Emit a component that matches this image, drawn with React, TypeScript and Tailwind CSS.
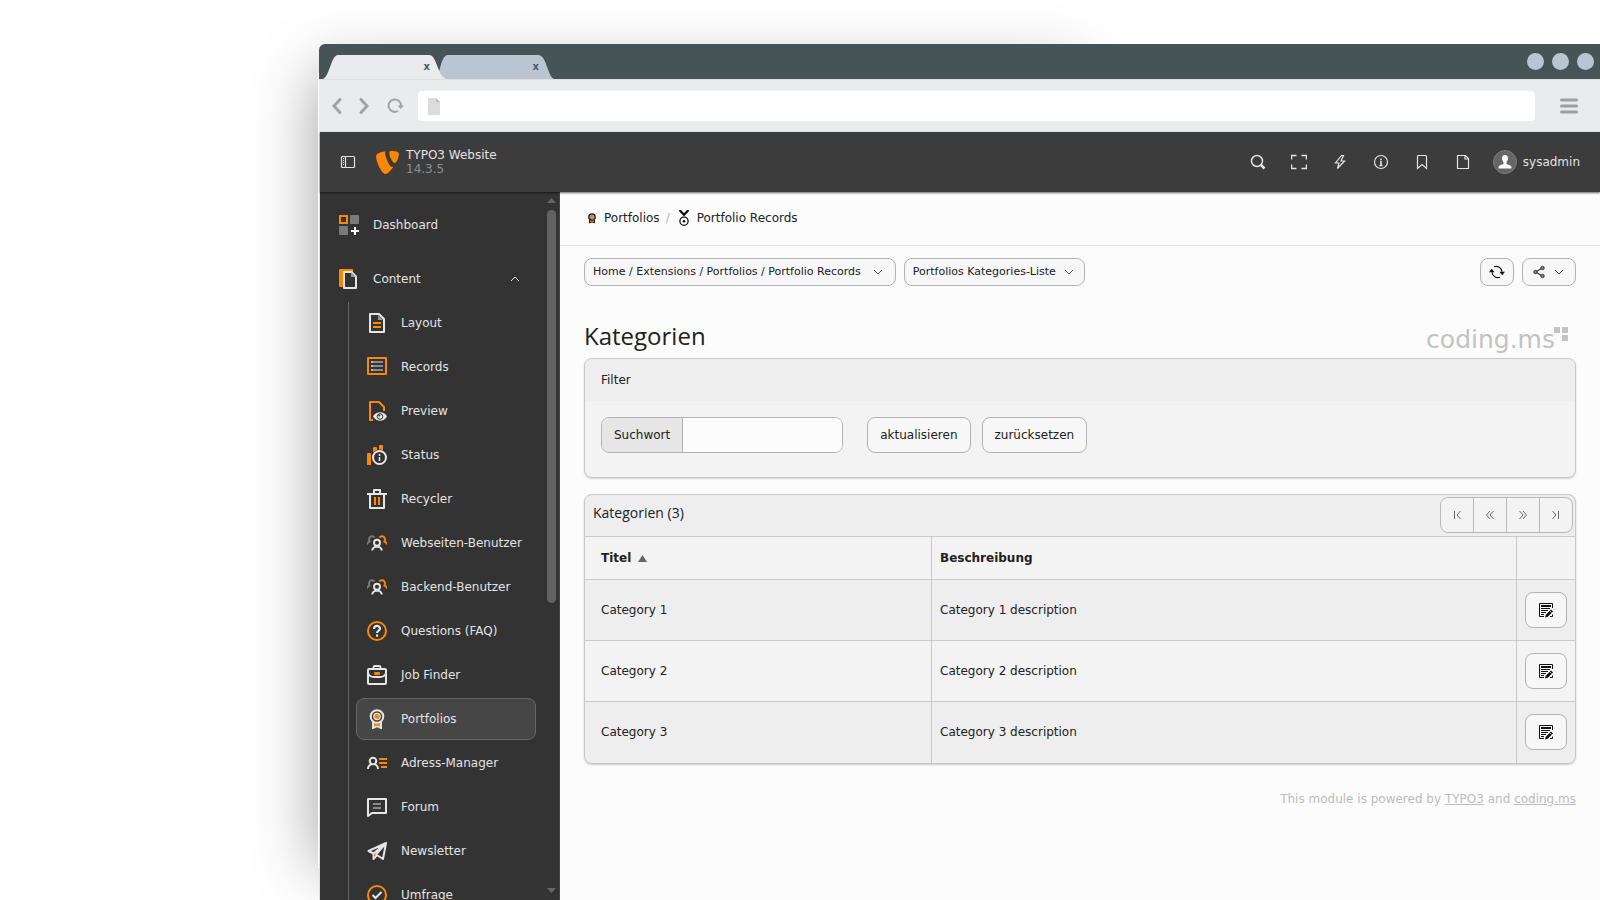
import type { ReactNode } from "react";
import { SiTypo3 } from "react-icons/si";

const ORANGE = "#ff8700";
const LIGHT = "#e6e6e6";
const GREY = "#7a7a7a";

function Icon({ size = 16, box = 16, children }: { size?: number; box?: number; children: ReactNode }) {
  return (
    <svg width={size} height={size} viewBox={`0 0 ${box} ${box}`} fill="none" aria-hidden="true" className="shrink-0">
      {children}
    </svg>
  );
}

function ModuleIcon({ children }: { children: ReactNode }) {
  return (
    <Icon size={20} box={20}>
      {children}
    </Icon>
  );
}

function Chevron({ up = false }: { up?: boolean }) {
  return (
    <svg width="10" height="10" viewBox="0 0 10 10" fill="none" stroke="currentColor" aria-hidden="true" className="shrink-0">
      <path d={up ? "M1 7l4-4 4 4" : "M1 3l4 4 4-4"} />
    </svg>
  );
}

const DashboardIcon = () => (
  <ModuleIcon>
    <rect x="1" y="1" width="7" height="7" stroke={ORANGE} strokeWidth="2" />
    <rect x="11" y="0" width="9" height="9" rx="1" fill={GREY} />
    <rect x="0" y="11" width="9" height="9" rx="1" fill={GREY} />
    <path d="M16 12v8M12 16h8" stroke="#fff" strokeWidth="2" />
  </ModuleIcon>
);

const ContentIcon = () => (
  <ModuleIcon>
    <path d="M1 0h13v3H5v15H1a1 1 0 0 1-1-1V1a1 1 0 0 1 1-1z" fill={ORANGE} />
    <path d="M5 3h7.500l4.500 4.500V19H5z" stroke={LIGHT} strokeWidth="2" strokeLinejoin="round" />
    <path d="M12 3v5h5z" fill="#999" />
  </ModuleIcon>
);

const LayoutIcon = () => (
  <ModuleIcon>
    <path d="M3 1h9l5 5v13H3z" stroke={LIGHT} strokeWidth="2" strokeLinejoin="round" />
    <path d="M11 2v5h5z" fill="#999" />
    <path d="M6 10h8M6 14h8" stroke={ORANGE} strokeWidth="2" />
  </ModuleIcon>
);

const RecordsIcon = () => (
  <ModuleIcon>
    <rect x="1" y="1" width="18" height="16" stroke={ORANGE} strokeWidth="2" strokeLinejoin="round" />
    <path d="M4 5h2M4 9h2M4 13h2" stroke={LIGHT} strokeWidth="1.500" />
    <path d="M6 5h10M6 9h10M6 13h10" stroke="#8a8a8a" strokeWidth="2" />
  </ModuleIcon>
);

const PreviewIcon = () => (
  <ModuleIcon>
    <path d="M6 19H3V1h9l5 5v4" stroke={ORANGE} strokeWidth="2" strokeLinejoin="round" />
    <path d="M6 15.500c3.200-5.600 11-5.600 14 0-3 5.600-10.800 5.600-14 0z" fill={LIGHT} />
    <circle cx="13" cy="15.500" r="2.800" stroke="#333" strokeWidth="1" />
    <circle cx="12.300" cy="14.500" r="1" fill="#333" />
  </ModuleIcon>
);

const StatusIcon = () => (
  <ModuleIcon>
    <path d="M0 9a1 1 0 0 1 1-1h2a1 1 0 0 1 1 1v11H0zM6 3a1 1 0 0 1 1-1h2a1 1 0 0 1 1 1v5H6zM12 1a1 1 0 0 1 1-1h2a1 1 0 0 1 1 1v5h-4z" fill={ORANGE} />
    <circle cx="12.500" cy="12.500" r="8" fill="#333" />
    <circle cx="12.500" cy="12.500" r="6.500" stroke={LIGHT} strokeWidth="2" />
    <path d="M12.500 9v2M12.500 12v4" stroke={LIGHT} strokeWidth="1.500" />
  </ModuleIcon>
);

const RecyclerIcon = () => (
  <ModuleIcon>
    <path d="M0 5h20M7 4V1h6v3M3 5v14h14V5" stroke={LIGHT} strokeWidth="2" strokeLinejoin="round" />
    <path d="M8 8v8M12 8v8" stroke={ORANGE} strokeWidth="2" />
  </ModuleIcon>
);

const UsersIcon = () => (
  <ModuleIcon>
    <path d="M0 11.500c.3-2 1.200-2.400 2.600-2.800C1.300 6 2.600 3.200 5 3.200c1.200 0 2 .4 2.600 1.300" stroke={GREY} strokeWidth="1.900" />
    <path d="M20 11.500c-.3-2-1.200-2.400-2.600-2.800C18.700 6 17.400 3.200 15 3.200c-1.200 0-2 .4-2.600 1.300" stroke={ORANGE} strokeWidth="1.900" />
    <circle cx="10" cy="9.800" r="3" stroke={LIGHT} strokeWidth="1.900" />
    <path d="M5.200 17.500c.2-2.200 1.200-3 3-3.600M14.800 17.500c-.2-2.200-1.200-3-3-3.600M8 13.700h4" stroke={LIGHT} strokeWidth="1.900" />
  </ModuleIcon>
);

const FaqIcon = () => (
  <ModuleIcon>
    <circle cx="10" cy="10" r="9" stroke={ORANGE} strokeWidth="2" />
    <path d="M7 8c0-4 6-4 6-.5 0 2.200-3 2.300-3 4.500" stroke={LIGHT} strokeWidth="2.200" />
    <path d="M9 13.500h2.200v2.200H9z" fill={LIGHT} />
  </ModuleIcon>
);

const JobIcon = () => (
  <ModuleIcon>
    <path d="M6.500 4V2.500A1.500 1.500 0 0 1 8 1h4a1.500 1.500 0 0 1 1.500 1.500V4" stroke={LIGHT} strokeWidth="1.900" />
    <rect x="1" y="4" width="18" height="15" rx="1" stroke={LIGHT} strokeWidth="2" />
    <path d="M1 8c1 3 3 4 6 4h6c3 0 5-1 6-4" stroke={LIGHT} strokeWidth="1.900" />
    <rect x="7" y="7" width="6" height="3" rx="1" fill={ORANGE} />
  </ModuleIcon>
);

const AwardIcon = () => (
  <ModuleIcon>
    <path d="M6 13v6l4-2 4 2v-6" stroke={LIGHT} strokeWidth="2" />
    <path d="M7 14h6v3.500l-3-1-3 1z" fill={ORANGE} />
    <circle cx="10" cy="7.500" r="6.300" fill="#444" stroke={LIGHT} strokeWidth="2" />
    <circle cx="10" cy="7.500" r="3.200" fill={ORANGE} stroke={LIGHT} strokeWidth="1.200" />
  </ModuleIcon>
);

const AddressIcon = () => (
  <ModuleIcon>
    <circle cx="6" cy="8" r="3.300" stroke={LIGHT} strokeWidth="2" />
    <path d="M1 16c0-2.600 1.200-4 3.400-4.600M11 16c0-2.600-1.200-4-3.400-4.600" stroke={LIGHT} strokeWidth="2" />
    <path d="M12 6h8M12 10h8M14 14h6" stroke={ORANGE} strokeWidth="2" />
  </ModuleIcon>
);

const ForumIcon = () => (
  <ModuleIcon>
    <path d="M1 2h18v14H5l-4 3z" stroke={LIGHT} strokeWidth="2" strokeLinejoin="round" />
    <path d="M6 7h8M6 11h8" stroke="#8a8a8a" strokeWidth="2" />
  </ModuleIcon>
);

const NewsletterIcon = () => (
  <ModuleIcon>
    <path d="M19 2L1.500 10l5 2.500L19 2zM19 2l-3 16-7-4.500L19 2zM6.500 12.500V18l3-3.500" stroke={LIGHT} strokeWidth="2" strokeLinejoin="round" />
    <circle cx="7.500" cy="14.500" r="1" fill={ORANGE} />
  </ModuleIcon>
);

const SurveyIcon = () => (
  <ModuleIcon>
    <circle cx="10" cy="10" r="9" stroke={ORANGE} strokeWidth="2" />
    <path d="M5.500 10l3 3 6-6" stroke={LIGHT} strokeWidth="2" />
  </ModuleIcon>
);

const modules: { label: string; icon: ReactNode; active?: boolean }[] = [
  { label: "Layout", icon: <LayoutIcon /> },
  { label: "Records", icon: <RecordsIcon /> },
  { label: "Preview", icon: <PreviewIcon /> },
  { label: "Status", icon: <StatusIcon /> },
  { label: "Recycler", icon: <RecyclerIcon /> },
  { label: "Webseiten-Benutzer", icon: <UsersIcon /> },
  { label: "Backend-Benutzer", icon: <UsersIcon /> },
  { label: "Questions (FAQ)", icon: <FaqIcon /> },
  { label: "Job Finder", icon: <JobIcon /> },
  { label: "Portfolios", icon: <AwardIcon />, active: true },
  { label: "Adress-Manager", icon: <AddressIcon /> },
  { label: "Forum", icon: <ForumIcon /> },
  { label: "Newsletter", icon: <NewsletterIcon /> },
  { label: "Umfrage", icon: <SurveyIcon /> },
];

function BrowserChrome() {
  return (
    <div className="shrink-0">
      <div className="flex h-[35px] items-end justify-between rounded-tl-md bg-[#465357] pl-1">
        <div className="flex">
          <div className="relative z-10 flex h-6 w-[123px] items-center justify-end pr-4">
            <svg className="absolute inset-0" width="123" height="24" viewBox="0 0 123 24" aria-hidden="true">
              <path d="M0 24C7 21 8 0 15 0h91c8 0 8 20 17 24z" fill="#eaebed" />
            </svg>
            <button aria-label="Tab schließen" className="relative text-[10px] leading-none font-bold text-[#465a70]">
              x
            </button>
          </div>
          <div className="relative -ml-3 flex h-6 w-[121px] items-center justify-end pr-4">
            <svg className="absolute inset-0" width="121" height="24" viewBox="0 0 121 24" aria-hidden="true">
              <path d="M0 24C7 21 6 0 14 0h90c9 0 9 21 16 24z" fill="#b9c5d1" />
            </svg>
            <button aria-label="Tab schließen" className="relative text-[10px] leading-none font-bold text-[#465a70]">
              x
            </button>
          </div>
        </div>
        <div className="flex gap-2 self-center pr-[6px]">
          <span className="size-[17px] rounded-full bg-[#b9c5d1]" />
          <span className="size-[17px] rounded-full bg-[#b9c5d1]" />
          <span className="size-[17px] rounded-full bg-[#b9c5d1]" />
        </div>
      </div>
      <div className="flex h-[53px] items-center border-t border-[#dcdfe2] bg-[#eaebed] pr-[21px] pl-3">
        <div className="flex items-center gap-[15px] text-[#a3a3a3]">
          <button aria-label="Zurück">
            <svg width="12" height="16" viewBox="0 0 12 16" fill="none" stroke="currentColor" strokeWidth="3">
              <path d="M9 1.500L3 8l6 6.500" strokeLinecap="round" />
            </svg>
          </button>
          <button aria-label="Vorwärts">
            <svg width="12" height="16" viewBox="0 0 12 16" fill="none" stroke="currentColor" strokeWidth="3">
              <path d="M3 1.500L9 8l-6 6.500" strokeLinecap="round" />
            </svg>
          </button>
          <button aria-label="Neu laden" className="ml-[2px]">
            <svg width="18" height="16" viewBox="0 0 18 16" fill="none" stroke="currentColor" strokeWidth="2">
              <path d="M11 13A6.200 6.200 0 1 1 14 8" />
              <path d="M10.500 7.500h6.500l-3.200 3.500z" fill="currentColor" stroke="none" />
            </svg>
          </button>
        </div>
        <div className="ml-[13px] flex h-[30px] flex-1 items-center rounded-[4px] bg-white pl-[10px]">
          <svg width="12" height="17" viewBox="0 0 12 17" aria-hidden="true">
            <path d="M0 0h8l4 4v13H0z" fill="#dcdcdc" />
            <path d="M8 0l4 4H8z" fill="#bdbdbd" />
          </svg>
          <input type="text" aria-label="Adresse" className="ml-2 h-full min-w-0 flex-1 bg-transparent text-xs outline-none" />
        </div>
        <button aria-label="Menü" className="ml-6">
          <svg width="20" height="18" viewBox="0 0 20 18" stroke="#9f9f9f" strokeWidth="3" strokeLinecap="round">
            <path d="M2.500 3h15M2.500 9h15M2.500 15h15" />
          </svg>
        </button>
      </div>
    </div>
  );
}

function Topbar() {
  const tools: [string, ReactNode][] = [
    [
      "Suche",
      <>
        <circle cx="7" cy="7" r="5.500" strokeWidth="1.500" />
        <path d="M11 11l3.500 3.500" strokeWidth="2.500" />
      </>,
    ],
    ["Vollbild", <path d="M.5 5.500v-4h5M10.500 1.500h5v4M15.500 10.500v4h-5M5.500 14.500h-5v-4" strokeWidth="1.500" />],
    ["Cache leeren", <path d="M9.500 1.500L3.500 9H7l-1.500 5.500L12.500 7H9l2.500-5.500z" strokeWidth="1.200" />],
    [
      "Systeminformationen",
      <>
        <circle cx="8" cy="8" r="6.500" strokeWidth="1.200" />
        <path d="M8 4.500V6M7 7.500h1V11M6.500 11.500h3" strokeWidth="1.500" />
      </>,
    ],
    ["Lesezeichen", <path d="M3.500 14.500v-12a1 1 0 0 1 1-1h7a1 1 0 0 1 1 1v12L8 10.500z" strokeWidth="1.200" />],
    ["Dokumente", <path d="M2.500 1.500h8l3 3v10h-11zM10 1.500v3.500h3.500" strokeWidth="1.200" />],
  ];
  return (
    <header className="relative z-10 flex h-[60px] shrink-0 items-center bg-[#3c3c3c] px-5 text-[#e3e3e3] shadow-[0_1px_2px_rgba(0,0,0,0.6)]">
      <button aria-label="Menü umschalten">
        <Icon>
          <rect x="1.500" y="2.500" width="13" height="11" rx="1" stroke="currentColor" strokeWidth="1.200" />
          <path d="M5.500 2.500v11" stroke="currentColor" strokeWidth="1.200" />
          <path d="M3.500 4v8" stroke="currentColor" strokeDasharray="1 1" />
        </Icon>
      </button>
      <a href="#home" className="ml-5 flex items-center gap-[7px]">
        <SiTypo3 size={23} color={ORANGE} />
        <span className="flex flex-col text-xs leading-[14px]">
          <span>TYPO3 Website</span>
          <span className="text-[#8f8f8f]">14.3.5</span>
        </span>
      </a>
      <div className="ml-auto flex items-center gap-[25px]">
        {tools.map(([label, shape]) => (
          <button key={label} aria-label={label}>
            <svg width="16" height="16" viewBox="0 0 16 16" fill="none" stroke="currentColor">
              {shape}
            </svg>
          </button>
        ))}
        <button className="-ml-[3px] flex items-center gap-[6px] text-xs">
          <svg width="24" height="24" viewBox="0 0 24 24" aria-hidden="true">
            <circle cx="12" cy="12" r="11.500" fill="#666" stroke="#7c7c7c" />
            <path d="M12 5c2 0 3 1.300 3 3.300 0 1.700-.8 3-1.500 3.700v2c1.500.6 4.500 1 5 3v1.500h-13V17c.5-2 3.500-2.400 5-3v-2C9.800 11.300 9 10 9 8.300 9 6.300 10 5 12 5z" fill="#fff" />
          </svg>
          sysadmin
        </button>
      </div>
    </header>
  );
}

function Sidebar() {
  return (
    <div className="flex w-[240px] shrink-0 border-r border-[#454545] bg-[#333]">
      <nav className="flex min-w-0 flex-1 flex-col overflow-hidden pt-3 pr-[11px] pl-2 text-xs text-[#e3e3e3]">
        <a href="#dashboard" className="flex h-[42px] shrink-0 items-center gap-[14px] px-[11px]">
          <DashboardIcon />
          Dashboard
        </a>
        <button className="mt-3 flex h-[42px] shrink-0 items-center gap-[14px] pr-4 pl-[11px] text-left">
          <ContentIcon />
          <span className="flex-1">Content</span>
          <Chevron up />
        </button>
        <ul className="mt-[2px] ml-5 flex flex-col gap-[2px] border-l border-[#636363] pl-[7px]">
          {modules.map((m) => (
            <li key={m.label}>
              <a
                href="#module"
                className={
                  m.active
                    ? "flex h-[42px] items-center gap-[14px] rounded-lg border border-[#666] bg-[#464646] px-[10px]"
                    : "flex h-[42px] items-center gap-[14px] border border-transparent px-[10px] whitespace-nowrap"
                }
              >
                {m.icon}
                {m.label}
              </a>
            </li>
          ))}
        </ul>
      </nav>
      <div className="flex w-[9px] flex-col items-center justify-between pt-[6px] pb-[7px]" aria-hidden="true">
        <div className="flex min-h-0 flex-1 flex-col items-center gap-[7px]">
          <svg width="9" height="5" viewBox="0 0 9 5" className="shrink-0">
            <path d="M0 5l4.500-5L9 5z" fill="#666" />
          </svg>
          <div className="h-[57%] w-[9px] rounded-full bg-[#626262]" />
        </div>
        <svg width="9" height="5" viewBox="0 0 9 5" className="shrink-0">
          <path d="M0 0h9L4.500 5z" fill="#666" />
        </svg>
      </div>
      <div className="w-[3px]" />
    </div>
  );
}

const EditIcon = () => (
  <Icon>
    <path d="M6 14.500H1.500v-13h13V6" stroke="#111" />
    <path d="M3 4h10" stroke="#111" strokeWidth="2" />
    <path d="M3 6.500h9M3 8.500h7M3 10.500h5M3 12.500h3" stroke="#111" />
    <path d="M7 15.500l.8-2.800L13 7.500l2 2-5.200 5.200z" fill="#111" />
    <path d="M11.500 8.500l2 2" stroke="#f7f7f7" strokeWidth=".8" />
    <path d="M14.500 12.500v2H12" stroke="#111" />
  </Icon>
);

const smallButton = "flex h-7 items-center rounded-lg border border-[#b3b3b3] bg-[#f7f7f7] text-[11px]";
const formButton = "block h-9 rounded-lg border border-[#b3b3b3] bg-[#f7f7f7] px-3 text-xs";

const pages: [string, string][] = [
  ["Erste Seite", "M5.500 4v8M11.500 4L8 8l3.500 4"],
  ["Vorherige Seite", "M8 4L4.500 8 8 12M11.500 4L8 8l3.500 4"],
  ["Nächste Seite", "M4.500 4L8 8l-3.500 4M8 4l3.500 4L8 12"],
  ["Letzte Seite", "M4.500 4L8 8l-3.500 4M10.500 4v8"],
];

function Logo() {
  return (
    <a href="#coding" className="flex items-start pr-2 text-[#c3c3c3]">
      <span className="text-[25px] leading-[25px]">coding.ms</span>
      <svg width="14" height="14" viewBox="0 0 14 14" fill="currentColor" aria-hidden="true" className="-ml-px">
        <path d="M0 0h6v6H0zM8 0h6v6H8zM8 8h6v6H8z" />
      </svg>
    </a>
  );
}

function Main() {
  return (
    <main className="min-w-0 flex-1 bg-[#fcfcfc] text-xs text-[#212121]">
      <nav className="flex h-[54px] items-center border-b border-[#e3e3e3] px-6 pb-[2px]">
        <a href="#portfolios" className="flex items-center gap-1">
          <svg width="16" height="16" viewBox="0 0 16 16" aria-hidden="true">
            <path d="M5.500 9.500v3.500L8 12l2.500 1V9.500z" fill={ORANGE} stroke="#222" />
            <circle cx="8" cy="7" r="3.200" fill="#999" stroke="#222" strokeWidth="1.300" />
            <circle cx="8" cy="7" r="1.500" fill={ORANGE} />
          </svg>
          Portfolios
        </a>
        <span className="mx-[6px] text-[#b5b5b5]">/</span>
        <a href="#records" className="flex items-center gap-[5px]">
          <svg width="16" height="16" viewBox="0 0 16 16" fill="none" stroke="#111" aria-hidden="true">
            <path d="M3.500 0L8 4.800 12.500 0" strokeWidth="2.200" />
            <circle cx="8" cy="11.200" r="4.100" strokeWidth="1.300" />
            <circle cx="8" cy="11.200" r="1.300" fill="#111" stroke="none" />
          </svg>
          Portfolio Records
        </a>
      </nav>

      <div className="px-6 pt-3">
        <div className="flex gap-2">
          <button className={`${smallButton} gap-3 px-2`}>
            Home / Extensions / Portfolios / Portfolio Records
            <span className="pr-1 text-[#555]">
              <Chevron />
            </span>
          </button>
          <button className={`${smallButton} gap-2 px-2`}>
            Portfolios Kategories-Liste
            <span className="pr-[2px] text-[#555]">
              <Chevron />
            </span>
          </button>
          <button aria-label="Aktualisieren" className={`${smallButton} ml-auto px-2`}>
            <svg width="16" height="16" viewBox="0 0 16 16" fill="none" stroke="#111">
              <path d="M5 2.800a6 6 0 0 1 8 5M11 13.200a6 6 0 0 1-8-5" strokeWidth="1.200" />
              <path d="M10.500 7.800h5.500l-2.800 3.500zM0 8.200h5.500L2.800 4.700z" fill="#111" stroke="none" />
            </svg>
          </button>
          <button aria-label="Teilen" className={`${smallButton} gap-[7px] pr-[11px] pl-2 text-[#444]`}>
            <Icon>
              <path d="M11 4L5 8l6 4" stroke="#333" strokeWidth="1.200" />
              <circle cx="11.500" cy="4" r="1.700" fill="#888" stroke="#333" />
              <circle cx="4.500" cy="8" r="1.700" fill="#888" stroke="#333" />
              <circle cx="11.500" cy="12" r="1.700" fill="#888" stroke="#333" />
            </Icon>
            <Chevron />
          </button>
        </div>

        <div className="mt-[34px] mb-[6px] flex items-start justify-between">
          <h1 className="font-['Open_Sans',sans-serif] text-2xl">Kategorien</h1>
          <div className="pt-[7px]">
            <Logo />
          </div>
        </div>

        <section className="overflow-hidden rounded-lg border border-[#c8c8c8] bg-[#f3f3f3] shadow-[0_1px_2px_rgba(0,0,0,0.15)]">
          <h2 className="flex h-[42px] items-center bg-[#eee] px-4">Filter</h2>
          <form className="flex px-4 pt-4 pb-6" onSubmit={(e) => e.preventDefault()}>
            <div className="flex h-9 overflow-hidden rounded-lg border border-[#b3b3b3]">
              <label htmlFor="word" className="flex items-center border-r border-[#b3b3b3] bg-[#e6e6e6] px-3">
                Suchwort
              </label>
              <input id="word" type="text" className="w-[159px] bg-[#fcfcfc] px-3 outline-none" />
            </div>
            <button className={`${formButton} ml-6`}>aktualisieren</button>
            <button type="reset" className={`${formButton} ml-[11px]`}>
              zurücksetzen
            </button>
          </form>
        </section>

        <section className="mt-4 overflow-hidden rounded-lg border border-[#c8c8c8] bg-[#eee] shadow-[0_1px_2px_rgba(0,0,0,0.2)]">
          <div className="flex h-[41px] justify-between pt-[2px] pr-[2px] pl-2">
            <h2 className="pt-[6px] font-['Open_Sans',sans-serif] text-sm">Kategorien (3)</h2>
            <div className="flex h-9 divide-x divide-[#b9b9b9] overflow-hidden rounded-lg border border-[#b9b9b9] bg-[#f3f3f3]">
              {pages.map(([label, d]) => (
                <button key={label} aria-label={label} className="px-2">
                  <svg width="16" height="16" viewBox="0 0 16 16" fill="none" stroke="#666">
                    <path d={d} />
                  </svg>
                </button>
              ))}
            </div>
          </div>
          <table className="w-full table-fixed border-collapse text-left">
            <thead>
              <tr className="h-[43px] border-t border-[#c8c8c8] bg-[#f3f3f3]">
                <th className="w-[35%] border-r border-[#c8c8c8] px-4 font-bold">
                  <span className="flex items-center gap-[7px]">
                    Titel
                    <svg width="9" height="7" viewBox="0 0 9 7" aria-hidden="true">
                      <path d="M0 7l4.500-7L9 7z" fill="#666" />
                    </svg>
                  </span>
                </th>
                <th className="border-r border-[#c8c8c8] px-2 font-bold">Beschreibung</th>
                <th className="w-[59px]" aria-label="Aktionen" />
              </tr>
            </thead>
            <tbody>
              {[1, 2, 3].map((n) => (
                <tr key={n} className="h-[61px] border-t border-[#c8c8c8] odd:bg-[#eee] even:bg-[#f3f3f3]">
                  <td className="border-r border-[#c8c8c8] px-4">Category {n}</td>
                  <td className="border-r border-[#c8c8c8] px-2">Category {n} description</td>
                  <td className="px-2">
                    <button aria-label={`Category ${n} bearbeiten`} className={formButton}>
                      <EditIcon />
                    </button>
                  </td>
                </tr>
              ))}
            </tbody>
          </table>
        </section>

        <p className="mt-[27px] text-right text-[#bdbdbd]">
          This module is powered by{" "}
          <a href="#typo3" className="underline">
            TYPO3
          </a>{" "}
          and{" "}
          <a href="#codingms" className="underline">
            coding.ms
          </a>
        </p>
      </div>
    </main>
  );
}

export default function App() {
  return (
    <div className="relative flex h-screen flex-col overflow-hidden bg-white pt-11 pl-[319px] font-['DejaVu_Sans',sans-serif]">
      <div className="absolute top-[72px] bottom-8 left-[318px] w-[760px] shadow-[0_0_60px_rgba(0,0,0,0.38)]" aria-hidden="true" />
      <div className="relative flex min-h-0 flex-1 flex-col">
        <BrowserChrome />
        <div className="flex min-h-0 flex-1 flex-col border-l border-[#e0e0e0]">
          <Topbar />
          <div className="flex min-h-0 flex-1">
            <Sidebar />
            <Main />
          </div>
        </div>
      </div>
    </div>
  );
}
